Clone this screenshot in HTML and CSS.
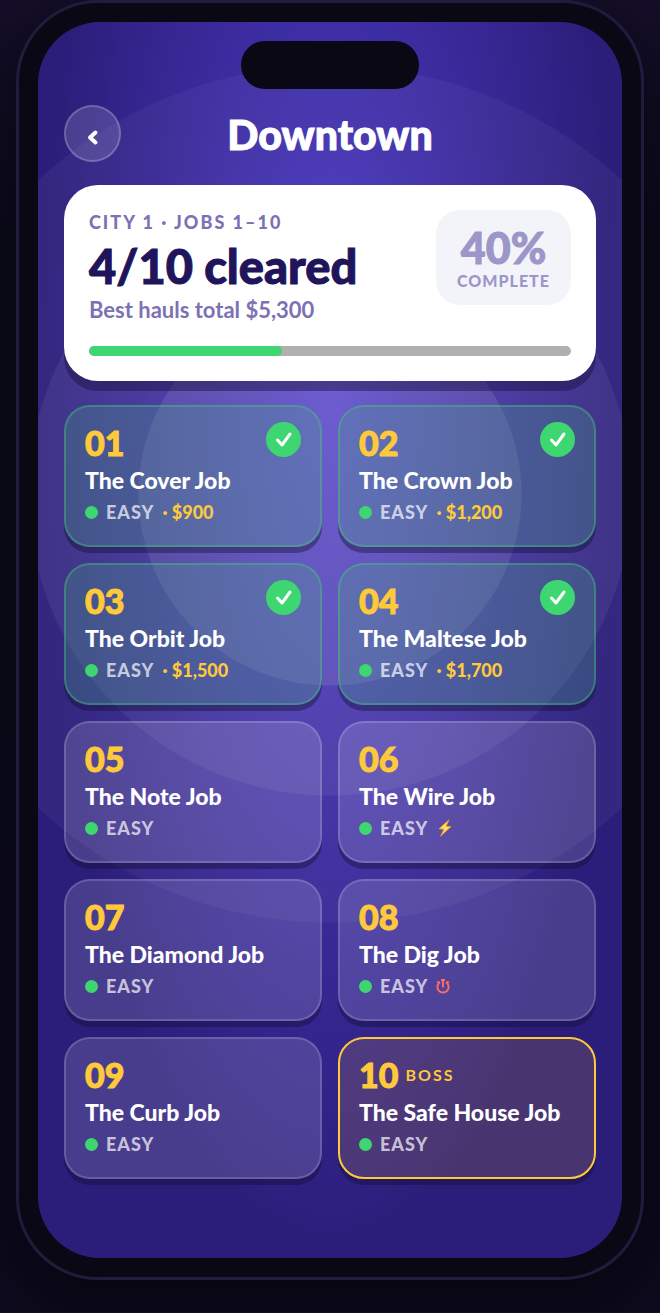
FILE: index.html
```html
<!DOCTYPE html>
<html lang="en">
<head>
<meta charset="utf-8">
<meta name="viewport" content="width=device-width, initial-scale=1">
<title>Downtown</title>
<link rel="stylesheet" href="styles.css">
</head>
<body>
<div class="phone">
  <main class="screen">
    <div class="notch"></div>
    <header class="topbar">
      <button class="back" type="button" aria-label="Back">
        <svg viewBox="0 0 12 18" aria-hidden="true"><path d="M8.500 4.500 3 9.500 8.500 14.500"/></svg>
      </button>
      <h1 class="title">Downtown</h1>
    </header>

    <section class="summary">
      <div class="summary-row">
        <div>
          <p class="eyebrow">CITY 1 · JOBS 1–10</p>
          <h2 class="cleared">4/10 cleared</h2>
          <p class="hauls">Best hauls total $5,300</p>
        </div>
        <div class="percent">
          <strong class="percent-value">40%</strong>
          <span class="percent-label">COMPLETE</span>
        </div>
      </div>
      <div class="bar" role="progressbar" aria-label="Jobs cleared" aria-valuenow="40" aria-valuemin="0" aria-valuemax="100"><div class="bar-fill" style="width:40%"></div></div>
    </section>

    <div class="jobs">
      <button class="job done" type="button">
        <span class="num">01</span>
        <span class="name">The Cover Job</span>
        <span class="meta"><i class="dot"></i><span class="level">EASY</span><span class="haul">· $900</span></span>
        <svg class="check" viewBox="0 0 35 35" aria-hidden="true"><path d="M11.5 18 16 23 24 12"/></svg>
      </button>
      <button class="job done" type="button">
        <span class="num">02</span>
        <span class="name">The Crown Job</span>
        <span class="meta"><i class="dot"></i><span class="level">EASY</span><span class="haul">· $1,200</span></span>
        <svg class="check" viewBox="0 0 35 35" aria-hidden="true"><path d="M11.5 18 16 23 24 12"/></svg>
      </button>
      <button class="job done" type="button">
        <span class="num">03</span>
        <span class="name">The Orbit Job</span>
        <span class="meta"><i class="dot"></i><span class="level">EASY</span><span class="haul">· $1,500</span></span>
        <svg class="check" viewBox="0 0 35 35" aria-hidden="true"><path d="M11.5 18 16 23 24 12"/></svg>
      </button>
      <button class="job done" type="button">
        <span class="num">04</span>
        <span class="name">The Maltese Job</span>
        <span class="meta"><i class="dot"></i><span class="level">EASY</span><span class="haul">· $1,700</span></span>
        <svg class="check" viewBox="0 0 35 35" aria-hidden="true"><path d="M11.5 18 16 23 24 12"/></svg>
      </button>
      <button class="job" type="button">
        <span class="num">05</span>
        <span class="name">The Note Job</span>
        <span class="meta"><i class="dot"></i><span class="level">EASY</span></span>
      </button>
      <button class="job" type="button">
        <span class="num">06</span>
        <span class="name">The Wire Job</span>
        <span class="meta"><i class="dot"></i><span class="level">EASY</span>
          <svg class="bolt" viewBox="0 0 14 18" aria-hidden="true"><path d="M11 .8 1 9.800 6 10.300 2.600 17.200 13 7.600 8 7.300Z"/></svg>
        </span>
      </button>
      <button class="job" type="button">
        <span class="num">07</span>
        <span class="name">The Diamond Job</span>
        <span class="meta"><i class="dot"></i><span class="level">EASY</span></span>
      </button>
      <button class="job" type="button">
        <span class="num">08</span>
        <span class="name">The Dig Job</span>
        <span class="meta"><i class="dot"></i><span class="level">EASY</span>
          <svg class="timer" viewBox="0 0 14 16" aria-hidden="true"><path d="M4 4.200A5.600 5.600 0 1 0 10 4.200M7 9.500V2M5 2H9M11 5 12.600 3.400M3 5 1.400 3.400"/></svg>
        </span>
      </button>
      <button class="job" type="button">
        <span class="num">09</span>
        <span class="name">The Curb Job</span>
        <span class="meta"><i class="dot"></i><span class="level">EASY</span></span>
      </button>
      <button class="job boss" type="button">
        <span class="num">10 <span class="tag">BOSS</span></span>
        <span class="name">The Safe House Job</span>
        <span class="meta"><i class="dot"></i><span class="level">EASY</span></span>
      </button>
    </div>
  </main>
</div>
</body>
</html>
```
FILE: styles.css
```css
* { box-sizing: border-box; }

body {
  margin: 0;
  padding: 0 16px 32px;
  background: linear-gradient(180deg, #140e28 0, #0b0a1a 240px, #0c0a1c 100%);
  color: #fff;
  font-family: Lato, "Open Sans", sans-serif;
}

h1, h2, p { margin: 0; }

.phone {
  padding: 19px;
  border: 3px solid #211b3d;
  border-radius: 82px;
  background: #0a0814;
  box-shadow: 0 20px 60px rgba(0, 0, 0, .45);
}

.screen {
  display: flex;
  flex-direction: column;
  padding: 19px 26px 79px;
  border-radius: 62px;
  background:
    radial-gradient(circle 192px at 50% 472px, rgba(255, 255, 255, .09) 191px, transparent 192px),
    radial-gradient(circle 302px at 50% 472px, rgba(255, 255, 255, .06) 301px, transparent 302px),
    radial-gradient(circle 429px at 50% 472px, rgba(255, 255, 255, .04) 428px, transparent 429px),
    radial-gradient(ellipse at 50% 30%, #4d3ac6 0%, #2b1e7a 70%);
}

.notch {
  align-self: center;
  width: 178px;
  height: 48px;
  border-radius: 24px;
  background: #0a0814;
}

.topbar {
  display: grid;
  grid-template-columns: 57px 1fr 57px;
  align-items: center;
  margin: 16px 0 23px;
}

.back {
  display: grid;
  place-items: center;
  width: 57px;
  height: 57px;
  padding: 6px 0 0;
  border: 2px solid rgba(255, 255, 255, .2);
  border-radius: 50%;
  background: rgba(255, 255, 255, .14);
}

.back svg {
  width: 12px;
  height: 18px;
  fill: none;
  stroke: #fff;
  stroke-width: 4;
  stroke-linecap: round;
  stroke-linejoin: round;
}

.title {
  padding-top: 2px;
  font-size: 41px;
  font-weight: 900;
  line-height: 48px;
  text-align: center;
  -webkit-text-stroke: 1px currentColor;
}

.summary {
  padding: 25px;
  border-radius: 34px;
  background: #fff;
  box-shadow: 0 10px 0 rgba(26, 16, 64, .45);
  color: #7d71b5;
}

.summary-row {
  display: flex;
  justify-content: space-between;
  align-items: flex-start;
}

.eyebrow {
  font-size: 18px;
  font-weight: 900;
  line-height: 24px;
  letter-spacing: 2px;
}

.cleared {
  color: #20145a;
  font-size: 47px;
  font-weight: 900;
  line-height: 64px;
  -webkit-text-stroke: 1px currentColor;
}

.hauls {
  font-size: 22px;
  font-weight: 700;
  line-height: 24px;
}

.percent {
  display: flex;
  flex-direction: column;
  align-items: center;
  width: 135px;
  padding: 16px 0 12px;
  border-radius: 24px;
  background: #f3f3fa;
  color: #9d96c8;
}

.percent-value {
  font-size: 43px;
  font-weight: 900;
  line-height: 43px;
  -webkit-text-stroke: 1px currentColor;
}

.percent-label {
  font-size: 16px;
  font-weight: 900;
  line-height: 24px;
  letter-spacing: 1px;
}

.bar {
  height: 10px;
  margin-top: 24px;
  border-radius: 5px;
  background: #b0b0b0;
  overflow: hidden;
}

.bar-fill {
  height: 100%;
  border-radius: 5px;
  background: #3ed671;
}

.jobs {
  display: grid;
  grid-template-columns: 1fr 1fr;
  gap: 16px;
  margin-top: 24px;
}

.job {
  position: relative;
  display: flex;
  flex-direction: column;
  align-items: flex-start;
  min-height: 142px;
  padding: 18px 19px;
  border: 2px solid rgba(255, 255, 255, .16);
  border-radius: 26px;
  background: rgba(255, 255, 255, .14);
  box-shadow: 0 6px 0 rgba(20, 12, 50, .4);
  color: #fff;
  font: inherit;
  text-align: left;
}

.done {
  border-color: rgba(62, 214, 113, .36);
  background-color: rgba(73, 175, 131, .26);
}

.boss {
  border-color: #ffc93c;
  background-color: rgba(255, 201, 60, .14);
}

.num {
  display: flex;
  align-items: center;
  gap: 7px;
  color: #ffc93c;
  font-size: 34px;
  font-weight: 900;
  line-height: 36px;
  -webkit-text-stroke: 1px currentColor;
}

.tag {
  font-size: 16px;
  font-weight: 700;
  line-height: 24px;
  letter-spacing: 2px;
  -webkit-text-stroke: 0;
}

.name {
  margin-top: 5px;
  font-size: 23px;
  font-weight: 900;
  line-height: 28px;
}

.meta {
  display: flex;
  align-items: center;
  margin-top: 6px;
  font-size: 18px;
  font-weight: 900;
  line-height: 24px;
}

.dot {
  width: 13px;
  height: 13px;
  margin-right: 8px;
  border-radius: 50%;
  background: #3ed671;
}

.level {
  margin-right: 8px;
  color: rgba(255, 255, 255, .7);
  letter-spacing: 1px;
}

.haul { color: #ffc93c; }

.check {
  position: absolute;
  top: 15px;
  right: 19px;
  width: 35px;
  height: 35px;
  border-radius: 50%;
  background: #3ed671;
  fill: none;
  stroke: #fff;
  stroke-width: 3;
  stroke-linecap: round;
  stroke-linejoin: round;
}

.bolt {
  width: 14px;
  height: 18px;
  margin-left: 2px;
  fill: #ffdf6b;
  stroke: #e89a25;
  stroke-width: 1;
}

.timer {
  width: 14px;
  height: 16px;
  fill: none;
  stroke: #ff6b5e;
  stroke-width: 2;
}
```
